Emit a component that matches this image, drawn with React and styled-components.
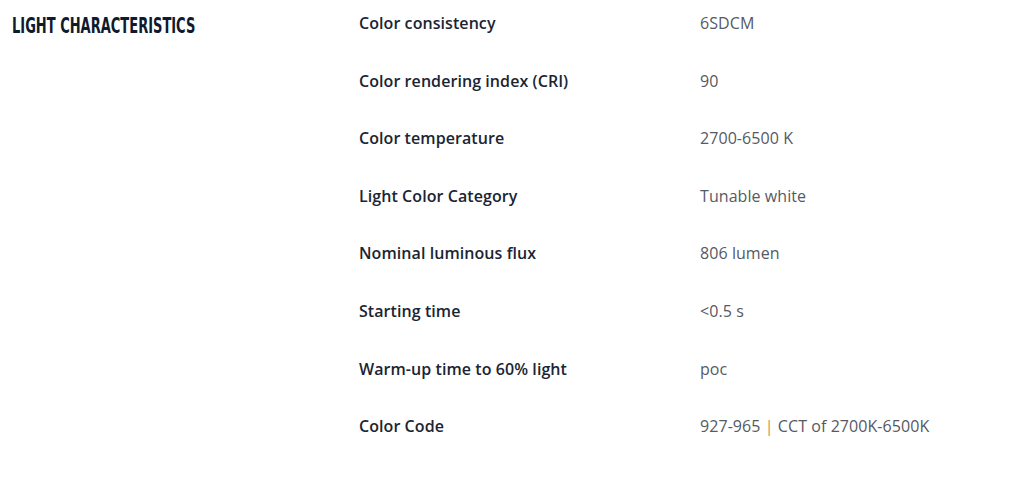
import React from "react";
import styled, { createGlobalStyle } from "styled-components";

const Global = createGlobalStyle`
  html, body { margin: 0; padding: 0; background: #fff; }
  body { font-family: "Open Sans", "Liberation Sans", sans-serif; }
`;

const Section = styled.section`
  display: grid;
  grid-template-columns: 347px 1fr;
  padding-left: 12px;
  width: 1019px;
  box-sizing: border-box;
`;

const HeadingCell = styled.div`
  padding-top: 15px;
`;

const Heading = styled.h3`
  display: inline-block;
  margin: 0;
  font-family: "DejaVu Sans", sans-serif;
  font-stretch: condensed;
  font-weight: 700;
  font-size: 22px;
  line-height: 22px;
  letter-spacing: 0px;
  color: #0f1a2c;
  text-transform: uppercase;
  white-space: nowrap;
  transform: scaleX(0.658);
  transform-origin: left center;
`;

const Table = styled.dl`
  margin: 0;
  display: grid;
  grid-template-columns: 341px 1fr;
`;

const Label = styled.dt`
  margin: 0;
  padding: 11px 0 21px;
  font-size: 16px;
  line-height: 25.6px;
  font-weight: 600;
  letter-spacing: 0.07px;
  color: #1b2433;
`;

const Value = styled.dd`
  margin: 0;
  padding: 11px 0 21px;
  font-size: 16px;
  line-height: 25.6px;
  font-weight: 400;
  letter-spacing: 0.07px;
  color: #555a63;
`;

const Sep = styled.span`
  color: #c8914f;
`;

const rows = [
  ["Color consistency", "6SDCM"],
  ["Color rendering index (CRI)", "90"],
  ["Color temperature", "2700-6500 K"],
  ["Light Color Category", "Tunable white"],
  ["Nominal luminous flux", "806 lumen"],
  ["Starting time", "<0.5 s"],
  ["Warm-up time to 60% light", "poc"],
  [
    "Color Code",
    <>
      927-965 <Sep>|</Sep> CCT of 2700K-6500K
    </>,
  ],
];

export default function App() {
  return (
    <>
      <Global />
      <Section>
        <HeadingCell>
          <Heading>Light Characteristics</Heading>
        </HeadingCell>
        <Table>
          {rows.map(([k, v], i) => (
            <React.Fragment key={i}>
              <Label>{k}</Label>
              <Value>{v}</Value>
            </React.Fragment>
          ))}
        </Table>
      </Section>
    </>
  );
}
